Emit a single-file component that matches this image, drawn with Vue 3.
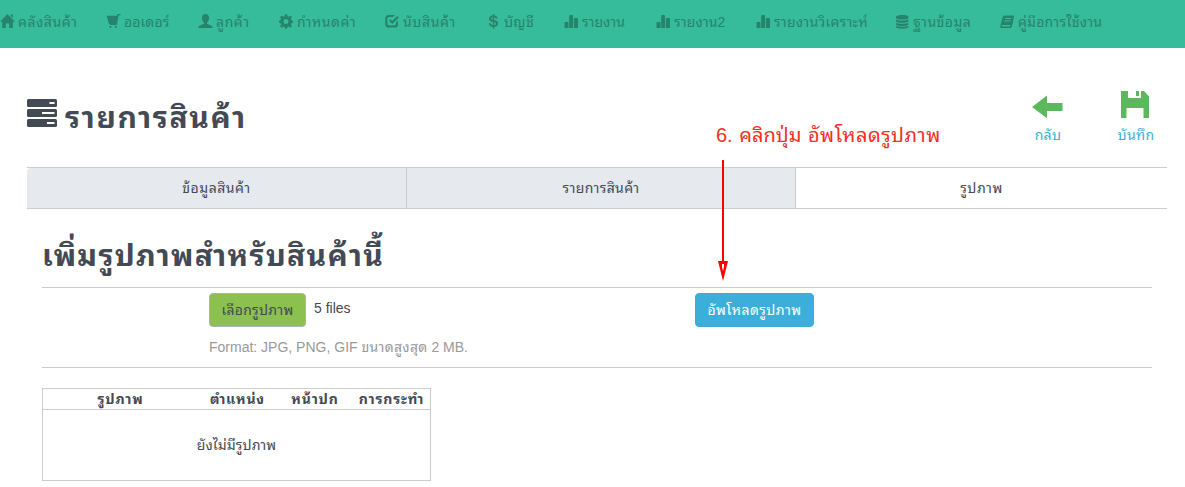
<script setup>
const menu = [
  { icon: 'home', label: 'คลังสินค้า', width: 106, text: 59, spacing: 0.55 },
  { icon: 'cart', label: 'ออเดอร์', width: 92, text: 44, spacing: 0.1 },
  { icon: 'user', label: 'ลูกค้า', width: 81, text: 33, spacing: 0.6 },
  { icon: 'cog', label: 'กำหนดค่า', width: 106, text: 58, spacing: 0.55 },
  { icon: 'check', label: 'นับสินค้า', width: 101, text: 52, spacing: 0.6 },
  { icon: 'dollar', label: 'บัญชี', width: 78, text: 30, spacing: 0.3 },
  { icon: 'stats', label: 'รายงาน', width: 92, text: 44, spacing: 0 },
  { icon: 'stats', label: 'รายงาน2', width: 100, text: 53, spacing: 0.1 },
  { icon: 'stats', label: 'รายงานวิเคราะห์', width: 139, text: 94, spacing: 0.25 },
  { icon: 'database', label: 'ฐานข้อมูล', width: 105, text: 58, spacing: 0.45 },
  { icon: 'book', label: 'คู่มือการใช้งาน', width: 102, text: 83, spacing: 0.22 }
]
const tabs = ['ข้อมูลสินค้า', 'รายการสินค้า', 'รูปภาพ']
const columns = ['รูปภาพ', 'ตำแหน่ง', 'หน้าปก', 'การกระทำ']
</script>

<template>
  <div class="page">
    <nav class="navbar">
      <a v-for="item in menu" :key="item.label" class="nav-item" :style="{ width: item.width + 'px' }">
        <svg class="nav-icon" viewBox="0 0 15 15">
          <path v-if="item.icon === 'home'" d="M7.500 0 15 7.800h-2.200V14H9.200V9.500H5.800V14H2.200V7.800H0zM10.800.5h2v3.500l-2-2z" />
          <path v-else-if="item.icon === 'cart'" d="M.5 1.800H10.900L11.700 0h2.800v1.300h-1.900L11.300 8.500 11 11H3.800V9.900H3zM3.500 12h1.800v2H3.500zM8.900 12h1.800v2H8.900z" />
          <path v-else-if="item.icon === 'user'" d="M7.500 0c2.200 0 3.500 1.500 3.500 4 0 2-.8 3.700-2 4.600v1.200l4.500 2c.7.300 1.200 1 1.200 2.200H.3c0-1.200.5-1.900 1.200-2.200l4.500-2V8.600C4.800 7.700 4 6 4 4c0-2.500 1.300-4 3.500-4z" />
          <path v-else-if="item.icon === 'cog'" fill-rule="evenodd" d="M6 .3h2l.5 2 1.200.5 1.800-1.100 1.500 1.500L11.900 5l.5 1.300 1.600.5v2l-1.600.4-.5 1.200 1.100 1.800-1.500 1.500-1.800-1.100-1.200.5-.5 1.700H6l-.5-1.700-1.200-.5-1.800 1.100L1 12.200l1.100-1.800-.5-1.200L0 8.800v-2l1.600-.5L2.100 5 1 3.200l1.500-1.500 1.800 1.100 1.200-.5zM7 4.900a2.500 2.500 0 1 0 0 5A2.500 2.500 0 0 0 7 4.900z" />
          <path v-else-if="item.icon === 'check'" d="M3.800 1h6L8 3H4.200Q2.300 3 2.300 4.800v5q0 1.800 1.900 1.800h5q1.800 0 1.800-1.800V8.600l2-2v3.600q0 3.400-3.400 3.400H3.800Q.3 13.600.3 10.200V4.400Q.3 1 3.800 1zM4 6.500l1.300-1.300 1.900 1.900 5-5 1.600 1.500-6.600 6.500z" />
          <path v-else-if="item.icon === 'dollar'" d="M6.700 0h1.500v1.400c2.200.2 3.400 1.400 3.500 3.200H9.500c-.1-.8-.5-1.300-1.300-1.500v3c2.600.6 3.900 1.600 3.900 3.500 0 2-1.500 3.200-3.900 3.400v1.500H6.700V13c-2.500-.2-3.900-1.600-4-3.700h2.200c.1 1.100.7 1.800 1.800 2V8C4.300 7.400 3 6.600 3 4.700c0-2 1.400-3.100 3.700-3.300zM6.700 3.100C5.700 3.300 5.200 3.800 5.200 4.600s.5 1.100 1.500 1.400zM8.200 8.300v3c1.100-.1 1.700-.7 1.700-1.500s-.5-1.200-1.700-1.500z" />
          <path v-else-if="item.icon === 'stats'" d="M.5 9q0-1 1-1h2q1 0 1 1v5h-4zM5.200 2q0-1 1-1h1.800q1 0 1 1v12H5.200zM9.800 5q0-1 1-1h2.200q1 0 1 1v9H9.800z" />
          <path v-else-if="item.icon === 'database'" d="M1 2.900C1 .5 13.500 .5 13.500 2.900V3.900C13.500 6 1 6 1 3.900zM1 5.600c2 1.300 10.500 1.300 12.500 0v1.700c-1 2-11.500 2-12.500 0zM1 8.700c2 1.300 10.500 1.300 12.500 0v1.700c-1 2-11.500 2-12.500 0zM1 11.800c2 1.300 10.500 1.300 12.500 0v1.300c-1 2.200-11.500 2.200-12.500 0z" />
          <path v-else fill-rule="evenodd" d="M4.300 1.500h8.900q1.100.2.800 1.200L12 12.200q-.4 1.800-2 1.800H1.400Q-.2 13.700.4 11.700L2.600 3.500q.4-1.700 1.700-2zM5.200 4.100l-.3.900h6l.3-.9zM4.600 6.500l-.3.900h6l.3-.9zM2 11.100q-.5 1.300.4 1.400h6.900q1 0 1.300-1.400z" />
        </svg>
        <span class="nav-label" :style="{ width: item.text + 'px', letterSpacing: item.spacing + 'px' }">{{ item.label }}</span>
      </a>
    </nav>

    <main class="content">
      <header class="heading">
        <svg class="title-icon" viewBox="0 0 30 29">
          <g fill="#434a54">
            <rect width="30" height="8" rx="1.500" />
            <rect y="10" width="30" height="8" rx="1.500" />
            <rect y="20" width="30" height="8" rx="1.500" />
          </g>
          <path fill="#fff" d="M22.500 3h5v2h-5zM15 13h12.500v2H15zM20 23h7.500v2H20z" />
        </svg>
        <h1>รายการสินค้า</h1>
        <div class="tools">
          <a class="tool back">
            <svg width="32" height="28" viewBox="0 0 32 28"><path d="M0 16 15 4.500V12H30.500v8H15v7.200z" /></svg>
            <span>กลับ</span>
          </a>
          <a class="tool save">
            <svg width="30" height="28" viewBox="0 0 30 28"><path d="M0 0h7v7h13V0h3L28 5.500V27h-5.500V17h-17v10H0zM15 0h3v5h-3z" /></svg>
            <span>บันทึก</span>
          </a>
        </div>
      </header>

      <div class="tabs">
        <a v-for="(tab, i) in tabs" :key="tab" class="tab" :class="{ active: i === 2 }">{{ tab }}</a>
      </div>

      <section class="panel">
        <h2>เพิ่มรูปภาพสำหรับสินค้านี้</h2>
        <div class="upload">
          <div class="choose">
            <div class="file-row">
              <button class="btn pick">เลือกรูปภาพ</button>
              <span class="files">5 files</span>
            </div>
            <p class="hint">Format: JPG, PNG, GIF <span>ขนาดสูงสุด</span> 2 MB.</p>
          </div>
          <button class="btn send">อัพโหลดรูปภาพ</button>
        </div>
        <table>
          <thead>
            <tr><th v-for="c in columns" :key="c">{{ c }}</th></tr>
          </thead>
          <tbody>
            <tr><td colspan="4">ยังไม่มีรูปภาพ</td></tr>
          </tbody>
        </table>
      </section>
    </main>

    <div class="note">6. คลิกปุ่ม <span>อัพโหลดรูปภาพ</span></div>
    <svg class="arrow" width="12" height="122" viewBox="0 0 12 122">
      <path d="M5 0h2v102H5z" fill="#f00" />
      <path fill-rule="evenodd" d="M1 101h10L6 121zM5 104h2v3L6 111 5 107z" fill="#f00" />
    </svg>
  </div>
</template>

<style>
body { margin: 0; background: #fff; overflow: hidden; }
</style>

<style scoped>
.page {
  position: relative;
  width: 1185px;
  height: 487px;
  overflow: hidden;
  font-family: "Liberation Sans", "Noto Sans Thai Looped", "Noto Sans Thai", sans-serif;
  font-size: 14px;
  line-height: 20px;
  color: #434a54;
}
.navbar { display: flex; height: 48px; background: #37bc9b; color: #26836c; box-sizing: border-box; padding-top: 12px; }
.nav-item { display: flex; flex: none; height: 20px; white-space: nowrap; }
.nav-icon { width: 15px; height: 15px; flex: none; margin: 2px 3px 0 0; fill: currentColor; }
.nav-label { flex: none; }
.content { padding: 0 18px 0 27px; }
.heading { display: flex; height: 119px; box-sizing: border-box; }
.title-icon { width: 30px; height: 29px; margin: 51px 8px 0 0; flex: none; }
h1, h2 { margin: 0; font-size: 30px; line-height: 40px; font-weight: 700; white-space: nowrap; letter-spacing: 1.6px; }
h1 { padding-top: 50px; }
.tools { display: flex; margin-left: auto; padding-top: 43px; }
.tool { display: flex; flex-direction: column; align-items: center; color: #3bafda; white-space: nowrap; letter-spacing: .3px; }
.tool svg { fill: #5cb85c; }
.tool span { margin-top: 6px; }
.back { width: 88px; }
.save { width: 88px; margin-right: -13px; }
.tabs { display: flex; height: 42px; box-sizing: border-box; border: 1px solid #ccc; border-width: 1px 0; }
.tab { box-sizing: border-box; width: 380px; border-right: 1px solid #ccc; background: #e6e9ed; text-align: center; line-height: 40px; border-radius: 4px 0 0 0; letter-spacing: .5px; }
.tab:nth-child(2) { width: 389px; border-radius: 0; letter-spacing: .35px; }
.tab.active { flex: 1; background: #fff; border: 0; }
.panel { padding: 0 15px; }
h2 { height: 79px; box-sizing: border-box; border-bottom: 1px solid #ccc; padding-top: 27px; letter-spacing: 1.3px; }
.upload { display: flex; align-items: flex-start; height: 80px; box-sizing: border-box; border-bottom: 1px solid #ccc; padding: 5px 0 0 167px; }
.choose { width: 486px; }
.file-row { display: flex; gap: 8px; line-height: 30px; }
.btn { box-sizing: border-box; height: 34px; border: 1px solid #aab2bd; border-radius: 4px; padding: 0; color: #434a54; font: inherit; line-height: 32px; white-space: nowrap; letter-spacing: .3px; }
.pick { width: 97px; background: #8cc152; }
.send { width: 119px; background: #3bafda; border-color: #3bafda; color: #fff; letter-spacing: .45px; }
.hint { margin: 10px 0 0; color: #999; white-space: nowrap; }
.hint span { letter-spacing: .3px; }
table { width: 389px; height: 93px; margin-top: 20px; border-collapse: collapse; table-layout: fixed; border: 1px solid #ccc; }
th, td { padding: 0; text-align: center; white-space: nowrap; }
thead { border-bottom: 1px solid #ccc; }
th { height: 20px; letter-spacing: .8px; }
td { letter-spacing: .1px; }
th:first-child { width: 155px; }
th:nth-child(2) { width: 79px; }
th:nth-child(3) { width: 76px; }
.note { position: absolute; left: 716px; top: 121px; font-size: 20px; line-height: 28px; color: #ee3124; white-space: nowrap; word-spacing: 1px; }
.note span { letter-spacing: .5px; }
.arrow { position: absolute; left: 717px; top: 160px; }
</style>
